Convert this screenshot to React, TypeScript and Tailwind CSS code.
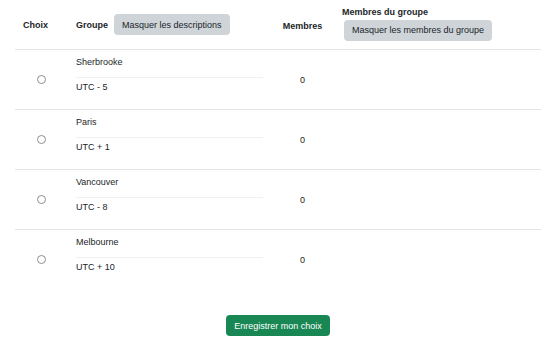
const groups = [
  { name: 'Sherbrooke', desc: 'UTC - 5', members: 0 },
  { name: 'Paris', desc: 'UTC + 1', members: 0 },
  { name: 'Vancouver', desc: 'UTC - 8', members: 0 },
  { name: 'Melbourne', desc: 'UTC + 10', members: 0 },
]

const cols = 'grid w-[526px] grid-cols-[52px_204px_63px_207px]'

export default function App() {
  return (
    <div className="w-[560px] h-[344px] bg-white px-[15px] text-[9px] leading-[14px] text-[#212529] font-['Liberation_Sans',Arial,sans-serif]">
      {/* header */}
      <div className={`${cols} h-[49px] items-center font-bold`}>
        <div className="pl-2">Choix</div>
        <div className="flex items-center gap-[6px] pl-[9px]">
          <span>Groupe</span>
          <button className="h-[21px] rounded-[4px] bg-[#cfd4d9] px-2 font-normal">
            Masquer les descriptions
          </button>
        </div>
        <div className="text-center pt-[2px]">Membres</div>
        <div className="flex flex-col items-start pl-2 pb-[3px]">
          <span className="leading-[12px]">Membres du groupe</span>
          <button className="mt-[2px] ml-[2px] h-[21px] rounded-[4px] bg-[#cfd4d9] px-2 font-normal">
            Masquer les membres du groupe
          </button>
        </div>
      </div>

      {/* rows */}
      {groups.map((g) => (
        <div
          key={g.name}
          className={`${cols} h-[60px] border-t border-[#e3e5e8]`}
        >
          <div className="flex items-center justify-center pl-[1px]">
            <span className="block h-[9px] w-[9px] rounded-full border border-[#8e8e8e] bg-white" />
          </div>
          <div className="pl-[9px] pr-2 pt-[5px]">
            <p>{g.name}</p>
            <hr className="mt-[8px] mb-[2px] border-0 border-t border-[#f1f1f1]" />
            <p>{g.desc}</p>
          </div>
          <div className="flex items-center justify-center">{g.members}</div>
          <div />
        </div>
      ))}

      <div className="mt-[26px] flex w-[526px] justify-center">
        <button className="h-[21px] rounded-[4px] bg-[#198754] px-2 text-white">
          Enregistrer mon choix
        </button>
      </div>
    </div>
  )
}
